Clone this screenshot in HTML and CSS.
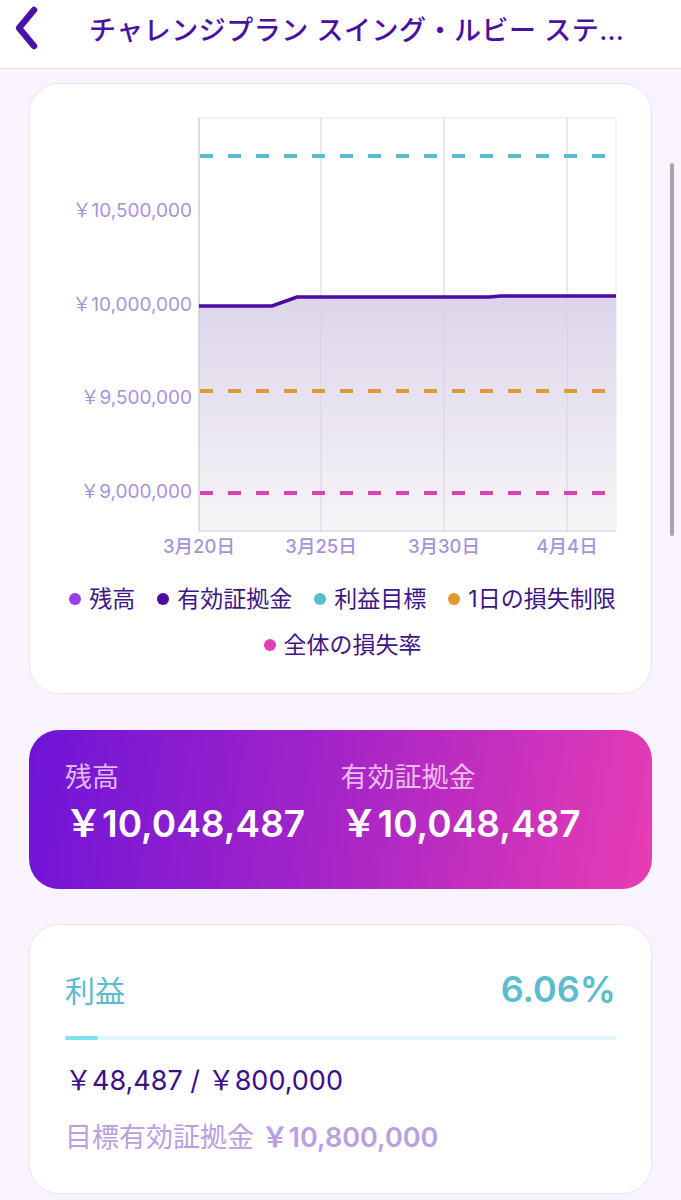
FILE: index.html
```html
<!DOCTYPE html>
<html>
<head>
<meta charset='utf-8'/>
<meta name='viewport' content='width=device-width,initial-scale=1'/>
<link rel="stylesheet" href="styles.css">
</head>
<body>
<div class='topbar'>
<svg class='back' width='32' height='46' viewBox='0 0 32 46'><path d='M22 5 L7 23 L22 41' fill='none' stroke='#4b12a6' stroke-width='6.5' stroke-linecap='round' stroke-linejoin='round'/></svg>
<h1 class='title'>チャレンジプラン スイング・ルビー ステ…</h1>
</div>
<div class='scrollbar'></div>
<div class='page'>

<div class='card chart-card'>
<svg class='chart' width='621' height='480' viewBox='0 0 621 480'>
<defs>
<linearGradient id='area' x1='0' y1='0' x2='0' y2='1'>
<stop offset='0' stop-color='#ddd4eb'/>
<stop offset='1' stop-color='#f6f5f7'/>
</linearGradient>
</defs>
<rect x='169' y='34' width='417' height='413' fill='#fff' stroke='#e6e3ea' stroke-width='1'/>
<path d='M169 222 L242 222 L267 213 L460 213 L470 212 L586 212 L586 447 L169 447 Z' fill='url(#area)'/>
<line x1='291' y1='34' x2='291' y2='447' stroke='#d8d0e6' stroke-width='1'/>
<line x1='414' y1='34' x2='414' y2='447' stroke='#d8d0e6' stroke-width='1'/>
<line x1='537' y1='34' x2='537' y2='447' stroke='#d8d0e6' stroke-width='1'/>
<line x1='169' y1='34' x2='169' y2='447' stroke='#c9c3d2' stroke-width='1'/>
<line x1='169' y1='447' x2='586' y2='447' stroke='#d6d2dc' stroke-width='1'/>
<line x1='170' y1='72' x2='586' y2='72' stroke='#5dbcc9' stroke-width='4' stroke-dasharray='13 15'/>
<line x1='170' y1='307' x2='586' y2='307' stroke='#de9a32' stroke-width='4' stroke-dasharray='13 15'/>
<line x1='170' y1='409' x2='586' y2='409' stroke='#e03fb6' stroke-width='4' stroke-dasharray='13 15'/>
<path d='M169 222 L242 222 L267 213 L460 213 L470 212 L586 212' fill='none' stroke='#4a0aa3' stroke-width='3.5'/>
<g class='ylabels'>
<text x='162' y='128'>￥10,500,000</text>
<text x='162' y='222'>￥10,000,000</text>
<text x='162' y='315'>￥9,500,000</text>
<text x='162' y='409'>￥9,000,000</text>
</g>
<g class='xlabels'>
<text x='169' y='464'>3月20日</text>
<text x='291' y='464'>3月25日</text>
<text x='414' y='464'>3月30日</text>
<text x='537' y='464'>4月4日</text>
</g>
</svg>
<div class='legend'>
<span class='item'><i class='dot balance'></i>残高</span>
<span class='item'><i class='dot equity'></i>有効証拠金</span>
<span class='item'><i class='dot target'></i>利益目標</span>
<span class='item'><i class='dot daily'></i>1日の損失制限</span>
<span class='item'><i class='dot total'></i>全体の損失率</span>
</div>
</div>

<div class='summary'>
<div class='stat'>
<div class='stat-label'>残高</div>
<div class='stat-value'>￥10,048,487</div>
</div>
<div class='stat'>
<div class='stat-label'>有効証拠金</div>
<div class='stat-value'>￥10,048,487</div>
</div>
</div>

<div class='card profit-card'>
<div class='profit-head'>
<span class='profit-title'>利益</span>
<span class='profit-rate'>6.06%</span>
</div>
<div class='bar'><div class='bar-fill' style='width:6.06%'></div></div>
<div class='profit-amount'>￥48,487 / ￥800,000</div>
<div class='profit-goal'>目標有効証拠金 <b>￥10,800,000</b></div>
</div>

</div>
</body>
</html>
```

FILE: styles.css
```css
body {
    margin: 0;
    background: #f9f3fd;
    font-family: "Inter", "Noto Sans CJK JP", sans-serif;
}
.topbar {
    display: flex;
    align-items: center;
    height: 68px;
    background: #fff;
    border-bottom: 1px solid #e2dfe6;
}
.back {
    margin-left: 12px;
    margin-top: -12px;
}
.title {
    margin: -12px 0 0 45px;
    font-size: 27px;
    font-weight: 500;
    color: #4a12a0;
    letter-spacing: 0.5px;
    white-space: nowrap;
}
.scrollbar {
    position: absolute;
    left: 670px;
    top: 163px;
    width: 4px;
    height: 373px;
    border-radius: 2px;
    background: #aaa3b2;
}
.page {
    padding: 14px 29px 20px;
}
.card {
    background: #fff;
    border: 1px solid #ece3f6;
    border-radius: 30px;
}
.chart-card {
    height: 609px;
}
.chart {
    display: block;
}
.ylabels text {
    font-size: 19px;
    fill: #a893d9;
    text-anchor: end;
    dominant-baseline: middle;
}
.xlabels text {
    font-size: 18.5px;
    fill: #a893d9;
    text-anchor: middle;
    dominant-baseline: middle;
    font-weight: 500;
}
.legend {
    display: flex;
    flex-wrap: wrap;
    justify-content: center;
    column-gap: 22px;
    row-gap: 12px;
    margin: 18px 20px 0 24px;
    font-size: 23px;
    color: #3f1585;
    line-height: 34px;
}
.item {
    display: flex;
    align-items: center;
}
.dot {
    width: 12px;
    height: 12px;
    border-radius: 50%;
    margin-right: 8px;
}
.balance { background: #9b3cf0; }
.equity { background: #4a0aa3; }
.target { background: #5dbcc9; }
.daily { background: #de9a32; }
.total { background: #e03fb6; }
.summary {
    display: flex;
    margin-top: 36px;
    height: 159px;
    box-sizing: border-box;
    padding: 30px 36px 0;
    border-radius: 30px;
    background: linear-gradient(100deg, #6e14d8 0%, #a725c7 50%, #e83cb4 100%);
}
.stat {
    width: 277px;
}
.stat-label {
    font-size: 27px;
    line-height: 36px;
    color: rgba(255, 230, 250, 0.78);
}
.stat-value {
    margin-top: 6px;
    font-size: 37px;
    font-weight: 600;
    line-height: 44px;
    color: #fff;
}
.profit-card {
    margin-top: 35px;
    height: 268px;
    padding: 0 35px;
}
.profit-head {
    display: flex;
    justify-content: space-between;
    align-items: center;
    margin-top: 44px;
    height: 40px;
}
.profit-title {
    font-size: 30px;
    color: #5bbccb;
}
.profit-rate {
    font-size: 36px;
    font-weight: 600;
    color: #5bbccb;
}
.bar {
    margin-top: 27px;
    height: 4px;
    border-radius: 2px;
    background: #dff7fb;
}
.bar-fill {
    height: 4px;
    border-radius: 2px;
    background: #80def0;
}
.profit-amount {
    margin-top: 22px;
    font-size: 27px;
    line-height: 38px;
    color: #3d0d8a;
}
.profit-goal {
    margin-top: 19px;
    font-size: 27px;
    line-height: 38px;
    color: #b9a0e0;
}
.profit-goal b {
    font-weight: 600;
}
```
